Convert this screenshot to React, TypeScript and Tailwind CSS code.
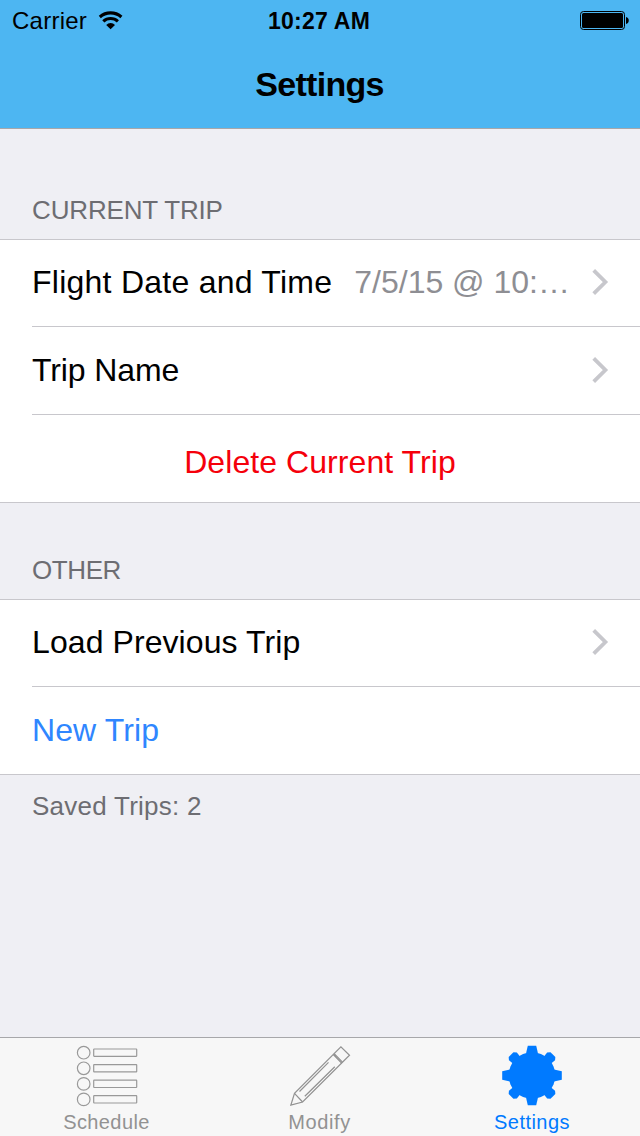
import React from "react";

const Chevron = () => (
  <svg className="mb-[2px] h-[28px] w-[18px] shrink-0" viewBox="0 0 18 28" fill="none" stroke="#c7c7cc" strokeWidth="3.8">
    <path d="M1.7 2.4L13.4 14L1.7 25.6" />
  </svg>
);

const Wifi = () => (
  <svg className="mt-[10px] ml-[11px] h-[20px] w-[26px]" viewBox="0 0 26 20" fill="none" stroke="#000" strokeWidth="3.1">
    <path d="M1.8 7A16.3 16.3 0 0 1 23.4 7" />
    <path d="M5.3 11.3A10.8 10.8 0 0 1 19.9 11.3" />
    <path d="M8.2 14.9A6.2 6.2 0 0 1 17 14.9L12.6 19.2Z" fill="#000" stroke="none" />
  </svg>
);

const Battery = () => (
  <svg className="mt-[11px] h-[19px] w-[50px]" viewBox="0 0 50 19">
    <rect x="0.5" y="0.5" width="44" height="18" rx="3" fill="none" stroke="#000" />
    <rect x="2" y="2" width="41" height="15" rx="1.5" />
    <path d="M46 6C49.7 6.5 49.7 12.5 46 13Z" />
  </svg>
);

const ScheduleIcon = () => (
  <svg className="h-[62px] w-[62px]" viewBox="0 0 62 62" fill="none" stroke="#999" strokeWidth="1.2">
    {[7.7, 23.3, 38.9, 54.4].map((y) => (
      <g key={y}>
        <circle cx="7.7" cy={y} r="6.3" />
        <rect x="17.7" y={y - 3.7} width="43" height="7.3" rx="0.5" />
      </g>
    ))}
  </svg>
);

const ModifyIcon = () => (
  <svg className="h-[62px] w-[62px]" viewBox="0 0 62 62" fill="none" stroke="#929292" strokeWidth="1.2">
    <path d="M1.8 60.2L5.5 48.3L51.9 1.8L60.5 10.3L13.6 57Z" />
    <path d="M5.5 48.3L13.6 57M45.2 8.6L53.5 17.2M44.3 9.5L52.6 18.1" />
    <path d="M10.5 46.5L39.5 17.3M15.8 51.2L45.8 21.8" />
  </svg>
);

const SettingsIcon = () => (
  <svg className="h-[62px] w-[62px]" viewBox="-31 -30.5 62 62" fill="#007aff">
    <circle r="23.3" />
    {[0, 90, 180, 270].map((a) => (
      <path key={a} transform={`rotate(${a})`} d="M-6 -22L-4.2 -29.8H4.2L6 -22Z" />
    ))}
    {[45, 135, 225, 315].map((a) => (
      <path key={a} transform={`rotate(${a})`} d="M-5 -22L-5.6 -27L-3.4 -29.6H3.4L5.6 -27L5 -22Z" />
    ))}
  </svg>
);

export default function App() {
  return (
    <div className="flex h-[1136px] w-[640px] flex-col overflow-hidden bg-[#efeff4] font-['Liberation_Sans',Arial,sans-serif] text-black">
      <header className="flex h-[129px] shrink-0 flex-col border-b border-[#a7a7aa] bg-[#4db6f2]">
        <div className="grid h-[40px] grid-cols-3">
          <div className="flex pl-[12px]">
            <span className="text-[24px] leading-[42px] tracking-[0.25px]">Carrier</span>
            <Wifi />
          </div>
          <div className="pr-[2px] text-center text-[23px] leading-[42px] font-bold tracking-[0.25px]">10:27 AM</div>
          <div className="flex justify-end pr-[10px]">
            <Battery />
          </div>
        </div>
        <h1 className="pr-[1px] text-center text-[34px] leading-[88px] font-bold tracking-[-0.7px]">Settings</h1>
      </header>
      <main className="flex-1">
        <h2 className="h-[110px] pt-[66px] pl-[32px] text-[26px] leading-[30px] tracking-[-0.15px] text-[#6d6d72]">CURRENT TRIP</h2>
        <section className="border-y border-[#c8c7cc] bg-white pl-[32px] text-[32px] leading-[87px]">
          <div className="flex h-[87px] items-center border-b border-[#c8c7cc] pr-[30px]">
            <span className="h-[88px] shrink-0 tracking-[0.25px]">Flight Date and Time</span>
            <span className="ml-[22px] h-[88px] flex-1 whitespace-nowrap text-[#8e8e93]">7/5/15 @ 10:…</span>
            <Chevron />
          </div>
          <div className="flex h-[88px] items-center justify-between border-b border-[#c8c7cc] pr-[30px]">
            <span className="h-[88px] tracking-[-0.1px]">Trip Name</span>
            <Chevron />
          </div>
          <div className="h-[87px] pr-[32px] text-center leading-[95px] tracking-[0.07px] text-[#f5000b]">Delete Current Trip</div>
        </section>
        <h2 className="h-[96px] pt-[52px] pl-[32px] text-[26px] leading-[30px] tracking-[-0.4px] text-[#6d6d72]">OTHER</h2>
        <section className="border-y border-[#c8c7cc] bg-white pl-[32px] text-[32px] leading-[87px]">
          <div className="flex h-[87px] items-center justify-between border-b border-[#c8c7cc] pr-[30px]">
            <span className="h-[88px] tracking-[0.08px]">Load Previous Trip</span>
            <Chevron />
          </div>
          <div className="h-[87px] tracking-[0.1px] text-[#2f86ff]">New Trip</div>
        </section>
        <p className="pt-[16px] pl-[32px] text-[26px] leading-[30px] tracking-[0.25px] text-[#6d6d72]">Saved Trips: 2</p>
      </main>
      <nav className="grid h-[99px] shrink-0 grid-cols-[213px_213px_212px] border-t border-[#a7a7aa] bg-[#f7f7f7] pt-[7px] text-[20px] leading-[30px] text-[#929292]">
        <div className="flex flex-col items-center">
          <ScheduleIcon />
          <span className="tracking-[0.4px]">Schedule</span>
        </div>
        <div className="flex flex-col items-center">
          <ModifyIcon />
          <span className="tracking-[0.6px]">Modify</span>
        </div>
        <div className="flex flex-col items-center text-[#007aff]">
          <SettingsIcon />
          <span className="tracking-[0.45px]">Settings</span>
        </div>
      </nav>
    </div>
  );
}
